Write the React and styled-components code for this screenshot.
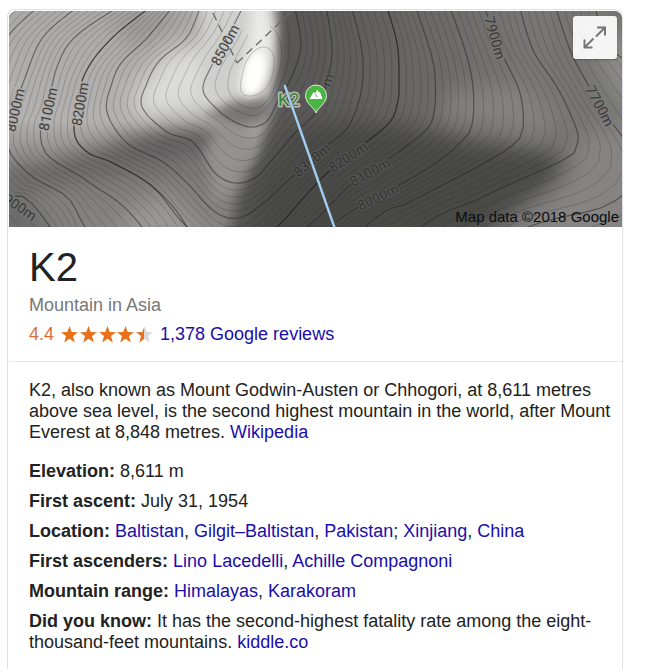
import React from "react";
import styled, { createGlobalStyle } from "styled-components";

const GlobalStyle = createGlobalStyle`
  * { box-sizing: border-box; }
  body {
    margin: 0;
    background: #fff;
    color: #222;
    font-family: "Liberation Sans", Arial, sans-serif;
    font-size: 18px;
    line-height: 21px;
  }
`;

const Page = styled.main`
  display: flex;
  min-height: 100vh;
  padding: 9px 22px 0 7px;
`;

const Card = styled.article`
  flex: 1;
  min-width: 0;
  padding: 1px 0 0 1px;
  border: 1px solid #dfe1e5;
  border-bottom: 0;
  border-radius: 8px 8px 0 0;
`;

const MapPanel = styled.div`
  position: relative;
  height: 216px;
  overflow: hidden;
  border-radius: 8px 8px 0 0;
  background: #777;
`;

const MapDrawing = styled.svg`
  display: block;
  width: 100%;
  height: 100%;
`;

const ExpandButton = styled.button`
  position: absolute;
  top: 5px;
  right: 5px;
  width: 44px;
  height: 43px;
  padding: 0;
  border: 0;
  border-radius: 3px;
  background: rgba(255, 255, 255, 0.92);
  box-shadow: 0 1px 2px rgba(0, 0, 0, 0.25);
  cursor: pointer;
`;

const Credit = styled.small`
  position: absolute;
  right: 3px;
  bottom: 0;
  color: #0c0c0c;
  font-size: 15px;
  line-height: 21px;
`;

const Header = styled.header`
  padding: 16px 20px;
  border-bottom: 1px solid #e8e8e8;
`;

const Title = styled.h1`
  margin: 0;
  font-size: 40px;
  font-weight: 400;
  line-height: 48px;
`;

const Subtitle = styled.div`
  margin-top: 4px;
  color: #777;
`;

const Rating = styled.div`
  display: flex;
  align-items: center;
  gap: 7px;
  margin-top: 8px;
`;

const Score = styled.span`
  color: #dd6b3a;
`;

const Stars = styled.svg`
  display: block;
  width: 92px;
  height: 17px;
`;

const Link = styled.a`
  color: #1a0dab;
  text-decoration: none;
  &:hover { text-decoration: underline; }
`;

const Details = styled.section`
  padding: 18px 8px 12px 20px;
`;

const Summary = styled.p`
  margin: 0;
`;

const Facts = styled.dl`
  display: flex;
  flex-direction: column;
  gap: 9px;
  margin: 18px 0 0;
`;

const Fact = styled.div`
  dt { display: inline; font-weight: 700; }
  dd { display: inline; margin: 0; }
`;

/* Each contour runs top edge, west bend, southern low point, east bend, top edge.
   knees holds the indexes of the three bends. */
const FLANKS = [
  { knees: [3, 6, 9], pts: [[-10, 5], [-35, 50], [-50, 110], [-50, 190], [-15, 235], [80, 420], [220, 560], [500, 400], [650, 290], [720, 190], [640, 75], [610, 48], [594, 5]] },
  { knees: [4, 7, 10], pts: [[40, 5], [9, 35], [-8, 70], [-18, 110], [-18, 155], [9, 195], [50, 227], [222, 510], [470, 260], [612, 203], [634, 160], [600, 107], [587, 83], [570, 50], [555, 5]] },
  { knees: [4, 9, 13], pts: [[80, 5], [43, 37], [25, 78], [14, 110], [7, 145], [30, 175], [67, 197], [85, 227], [130, 300], [225, 440], [400, 245], [483, 197], [567, 158], [578, 141], [573, 120], [557, 87], [533, 50], [519, 5]] },
  { knees: [5, 9, 14], pts: [[121, 5], [75, 37], [57, 67], [48, 105], [41, 122], [42, 145], [53, 160], [90, 183], [142, 227], [230, 365], [365, 227], [410, 202], [477, 167], [513, 145], [523, 128], [520, 93], [505, 60], [495, 38], [484, 5]] },
  { knees: [3, 8, 13], pts: [[153, 5], [110, 40], [83, 78], [74, 130], [87, 152], [113, 163], [153, 187], [187, 227], [231, 320], [330, 227], [378, 197], [430, 167], [460, 143], [472, 125], [473, 87], [465, 50], [449, 5]] },
];

const EAST_8100 = { knees: [4, 8, 13], pts: [[177, 5], [147, 38], [122, 62], [111, 83], [107, 112], [127, 143], [163, 162], [193, 190], [234, 280], [307, 227], [348, 187], [370, 172], [423, 133], [434, 112], [435, 77], [430, 50], [415, 5]] };

const SUMMIT = [
  { knees: [3, 8, 12], pts: [[153, 5], [110, 40], [83, 78], [74, 130], [87, 152], [113, 163], [153, 187], [187, 227], [235, 262], [277, 227], [328, 172], [385, 127], [397, 105], [399, 80], [397, 43], [386, 5]] },
  { knees: [4, 9, 14], pts: [[174, 5], [147, 38], [122, 62], [112, 83], [107, 112], [127, 143], [163, 162], [187, 183], [215, 212], [238, 218], [260, 206], [292, 177], [328, 145], [348, 127], [360, 97], [363, 67], [360, 40], [351, 5]] },
  { knees: [4, 8, 13], pts: [[201, 5], [187, 37], [160, 60], [147, 83], [142, 107], [167, 132], [193, 142], [215, 173], [235, 183], [255, 178], [272, 160], [295, 133], [315, 113], [326, 85], [332, 50], [326, 5]] },
  { knees: [3, 6, 10], pts: [[244, 5], [225, 42], [212, 65], [203, 90], [218, 110], [235, 122], [252, 127], [267, 121], [277, 103], [290, 80], [300, 53], [300, 33], [294, 5]] },
];

const STEPS = 12;
const PER_SECTION = 36;

const spline = (p0, p1, p2, p3, t) =>
  [0, 1].map((k) =>
    0.5 * (2 * p1[k] + (p2[k] - p0[k]) * t + (2 * p0[k] - 5 * p1[k] + 4 * p2[k] - p3[k]) * t * t +
      (3 * p1[k] - p0[k] - 3 * p2[k] + p3[k]) * t * t * t));

const resample = (pts, count) => {
  const dist = [0];
  for (let i = 1; i < pts.length; i++) {
    dist.push(dist[i - 1] + Math.hypot(pts[i][0] - pts[i - 1][0], pts[i][1] - pts[i - 1][1]));
  }
  const total = dist[dist.length - 1];
  return Array.from({ length: count }, (_, n) => {
    const d = (n / (count - 1)) * total;
    let i = 1;
    while (i < pts.length - 1 && dist[i] < d) i++;
    const f = (d - dist[i - 1]) / (dist[i] - dist[i - 1] || 1);
    return [0, 1].map((k) => pts[i - 1][k] + (pts[i][k] - pts[i - 1][k]) * f);
  });
};

const trace = ({ pts, knees }) => {
  const dense = [];
  for (let i = 0; i < pts.length - 1; i++) {
    for (let s = 0; s < STEPS; s++) {
      dense.push(spline(pts[Math.max(0, i - 1)], pts[i], pts[i + 1], pts[Math.min(pts.length - 1, i + 2)], s / STEPS));
    }
  }
  dense.push(pts[pts.length - 1]);
  const cuts = [0, ...knees.map((k) => k * STEPS), dense.length - 1];
  return cuts.slice(1).flatMap((end, i) => resample(dense.slice(cuts[i], end + 1), PER_SECTION));
};

const toPath = (pts) => "M" + pts.map(([x, y]) => `${x.toFixed(1)} ${y.toFixed(1)}`).join("L");
const blend = (a, b, f) => a.map((p, i) => [p[0] + (b[i][0] - p[0]) * f, p[1] + (b[i][1] - p[1]) * f]);
const westHalf = (pts) => pts.slice(0, 2 * PER_SECTION);
const eastHalf = (pts) => pts.slice(2 * PER_SECTION);

/* West and east flanks hold different heights at the low point, so each is blended on its own. */
const ranges = [
  FLANKS.map(trace).map(westHalf),
  [...FLANKS, EAST_8100, SUMMIT[0]].map(trace).map(eastHalf),
  SUMMIT.map(trace),
];

const minorLines = ranges.flatMap((set) =>
  set.slice(1).flatMap((line, i) => [0.2, 0.4, 0.6, 0.8].map((f) => toPath(blend(set[i], line, f)))));
const majorLines = ranges.flatMap((set) => set.map(toPath));

const LABELS = [
  ["8000m", 15, 110, -77], ["8100m", 48, 109, -78], ["8200m", 80, 104, -80],
  ["7900m", 17, 205, 34], ["8500m", 225, 45, -62], ["8300m", 312, 160, -40],
  ["8200m", 348, 157, -33], ["8100m", 370, 172, -29], ["8000m", 378, 197, -25],
  ["7900m", 495, 38, 74], ["7700m", 600, 106, 62], ["m", 328, 80, -69],
];

function TerrainMap() {
  return (
    <MapDrawing viewBox="9 11 613 216" preserveAspectRatio="xMidYMid slice" role="img" aria-label="Terrain map of K2">
      <defs>
        <linearGradient id="west" x1="0" y1="0" x2="0" y2="1">
          <stop offset="0" stopColor="#a9a8a6" />
          <stop offset="0.5" stopColor="#b4b2b0" />
          <stop offset="0.72" stopColor="#7d7c7b" />
          <stop offset="1" stopColor="#868583" />
        </linearGradient>
        <linearGradient id="east" x1="0" y1="0" x2="1" y2="0">
          <stop offset="0" stopColor="#545352" />
          <stop offset="0.25" stopColor="#5c5b5a" />
          <stop offset="0.45" stopColor="#6a6866" />
          <stop offset="0.7" stopColor="#777674" />
          <stop offset="1" stopColor="#747371" />
        </linearGradient>
        <filter id="soft6" x="-50%" y="-50%" width="200%" height="200%"><feGaussianBlur stdDeviation="6" /></filter>
        <filter id="soft12" x="-50%" y="-50%" width="200%" height="200%"><feGaussianBlur stdDeviation="11" /></filter>
        <filter id="soft3" x="-50%" y="-50%" width="200%" height="200%"><feGaussianBlur stdDeviation="3" /></filter>
        <mask id="labelGaps" maskUnits="userSpaceOnUse" x="0" y="0" width="640" height="240">
          <rect width="640" height="240" fill="#fff" />
          {LABELS.map(([text, x, y, turn]) => (
            <rect
              key={text + x}
              x={text.length * -4.5}
              y="-6"
              width={text.length * 9}
              height="12"
              fill="#000"
              transform={`translate(${x} ${y}) rotate(${turn})`}
            />
          ))}
        </mask>
      </defs>

      <rect x="0" y="0" width="640" height="240" fill="url(#west)" />
      <g filter="url(#soft12)">
        <path d="M130 100L165 55L205 40L245 60L235 105L180 114L145 118Z" fill="#dcdcdb" />
        <path d="M0 178L60 163L110 145L160 126L215 125L222 158L170 166L110 172L60 180L0 192Z" fill="#626160" />
        <path d="M120 240L130 208L170 195L210 240Z" fill="#9a9998" />
        <path d="M-10 240L-10 195L30 200L60 240Z" fill="#6b6a69" />
        <path d="M110 10L180 0L170 30L130 50Z" fill="#9a9997" />
      </g>
      <path d="M278 -20L275 60L272 110L256 160L238 195L226 250L660 250L660 -20Z" fill="url(#east)" filter="url(#soft6)" />
      <g filter="url(#soft12)">
        <path d="M290 130L340 123L400 125L470 140L550 152L580 170L540 192L460 250L245 250L260 180Z" fill="#484847" />
        <path d="M450 90L520 85L560 115L545 132L440 120Z" fill="#83827f" />
        <path d="M545 205L590 130L650 120L650 250L500 250Z" fill="#858482" />
        <path d="M590 20L650 50L650 130L610 90Z" fill="#8c8b89" />
      </g>
      <path d="M222 128L250 132L254 150L234 190L215 205L205 150Z" fill="#939291" filter="url(#soft6)" />
      <path d="M200 0L264 0L273 60L262 95L240 100L200 100Z" fill="#cfcfcd" filter="url(#soft6)" />
      <path d="M204 116L232 102L262 98L276 104L264 122L240 128Z" fill="#767574" filter="url(#soft6)" />
      <path d="M254 -10L268 0L274 30L270 70L262 92L245 96L238 86L248 50Z" fill="#ebebea" filter="url(#soft6)" />
      <ellipse cx="254" cy="74" rx="10" ry="22" transform="rotate(14 254 74)" fill="#fff" filter="url(#soft3)" />

      <g fill="none" stroke="#242322" mask="url(#labelGaps)">
        <g strokeWidth="0.8" strokeOpacity="0.28">
          {minorLines.map((d, i) => <path key={i} d={d} />)}
          <path d="M268 48C260 44 247 52 243 72C238 90 240 97 252 96C266 94 273 80 274 66C275 56 273 51 268 48Z" />
          <path d="M248 34C241 50 226 70 228 88C231 102 245 110 257 108C270 104 276 86 280 68C284 50 280 32 270 26" />
          <path d="M242 30C235 48 216 68 215 86C216 100 236 114 254 116C268 113 276 94 285 73C292 52 290 30 284 11" />
        </g>
        <g strokeWidth="1.2" strokeOpacity="0.52">
          {majorLines.map((d, i) => <path key={i} d={d} />)}
        </g>
      </g>

      <g fill="none" stroke="#6a6a69" strokeWidth="1.3" strokeDasharray="8 5">
        <path d="M213 13L237 63" />
        <path d="M237 63L290 13" />
      </g>
      <g
        fill="#2b2a29"
        fillOpacity="0.85"
        stroke="#8a8a88"
        strokeOpacity="0.22"
        strokeWidth="2"
        paintOrder="stroke"
        fontFamily="Roboto, sans-serif"
        fontSize="14"
        textAnchor="middle"
      >
        {LABELS.map(([text, x, y, turn]) => (
          <text key={text + x} y="5" transform={`translate(${x} ${y}) rotate(${turn})`}>{text}</text>
        ))}
      </g>

      <text x="278" y="106" fill="#36842f" stroke="#cfcfcd" strokeOpacity="0.85" strokeWidth="3" strokeLinejoin="round" paintOrder="stroke" fontFamily="Roboto, sans-serif" fontSize="18">K2</text>
      <path d="M284.500 85L335 229" stroke="#55585c" strokeOpacity="0.5" strokeWidth="4" />
      <path d="M284.500 85L335 229" stroke="#a3cff5" strokeWidth="2.300" />
      <path d="M316 113C314.500 107.500 305.500 104 305.500 95.500A10.500 10.500 0 0 1 326.500 95.500C326.500 104 317.500 107.500 316 113Z" fill="#4bb543" stroke="#dcebd9" strokeWidth="1" />
      <path d="M309.500 99L313.500 92L315 93.500L317.500 89.500L319 92.500L320 92L322.500 99Z" fill="#fff" />
      <path d="M315.500 94L317 97" stroke="#4bb543" strokeWidth="1" />
    </MapDrawing>
  );
}

const STAR = "M8.500 0L10.700 6L17 6.200L12 10.100L13.800 16.500L8.500 12.800L3.200 16.500L5 10.100L0 6.200L6.300 6Z";

function StarRating() {
  return (
    <Stars viewBox="0 0 92 17" role="img" aria-label="Rated 4.4 out of 5">
      <defs>
        <linearGradient id="halfStar">
          <stop offset="0.5" stopColor="#e7711b" />
          <stop offset="0.5" stopColor="#d8d8d8" />
        </linearGradient>
      </defs>
      {[0, 19, 38, 56, 75].map((x, i) => (
        <path key={x} d={STAR} transform={`translate(${x} 0)`} fill={i < 4 ? "#e7711b" : "url(#halfStar)"} />
      ))}
    </Stars>
  );
}

const LinkList = ({ items }) =>
  items.map(([text, after]) => (
    <React.Fragment key={text}>
      <Link href="#">{text}</Link>{after}
    </React.Fragment>
  ));

const FACTS = [
  ["Elevation", "8,611 m"],
  ["First ascent", "July 31, 1954"],
  ["Location", <LinkList items={[["Baltistan", ", "], ["Gilgit–Baltistan", ", "], ["Pakistan", "; "], ["Xinjiang", ", "], ["China", ""]]} />],
  ["First ascenders", <LinkList items={[["Lino Lacedelli", ", "], ["Achille Compagnoni", ""]]} />],
  ["Mountain range", <LinkList items={[["Himalayas", ", "], ["Karakoram", ""]]} />],
  ["Did you know", <>It has the second-highest fatality rate among the eight-thousand-feet mountains. <Link href="#">kiddle.co</Link></>],
];

export default function App() {
  return (
    <>
      <GlobalStyle />
      <Page>
        <Card>
          <MapPanel>
            <TerrainMap />
            <Credit>Map data ©2018 Google</Credit>
            <ExpandButton type="button" aria-label="Expand map">
              <svg width="44" height="43" viewBox="0 0 44 43" fill="none" stroke="#757575" strokeWidth="2">
                <path d="M24 11.500H32V19.500M31.500 12L23 20.500M11.500 23.500V31.500H19.500M12 31L20.500 22.500" />
              </svg>
            </ExpandButton>
          </MapPanel>
          <Header>
            <Title>K2</Title>
            <Subtitle>Mountain in Asia</Subtitle>
            <Rating>
              <Score>4.4</Score>
              <StarRating />
              <Link href="#">1,378 Google reviews</Link>
            </Rating>
          </Header>
          <Details>
            <Summary>
              K2, also known as Mount Godwin-Austen or Chhogori, at 8,611 metres above sea level, is the
              second highest mountain in the world, after Mount Everest at 8,848 metres.{" "}
              <Link href="#">Wikipedia</Link>
            </Summary>
            <Facts>
              {FACTS.map(([name, value]) => (
                <Fact key={name}>
                  <dt>{name}:</dt> <dd>{value}</dd>
                </Fact>
              ))}
            </Facts>
          </Details>
        </Card>
      </Page>
    </>
  );
}
